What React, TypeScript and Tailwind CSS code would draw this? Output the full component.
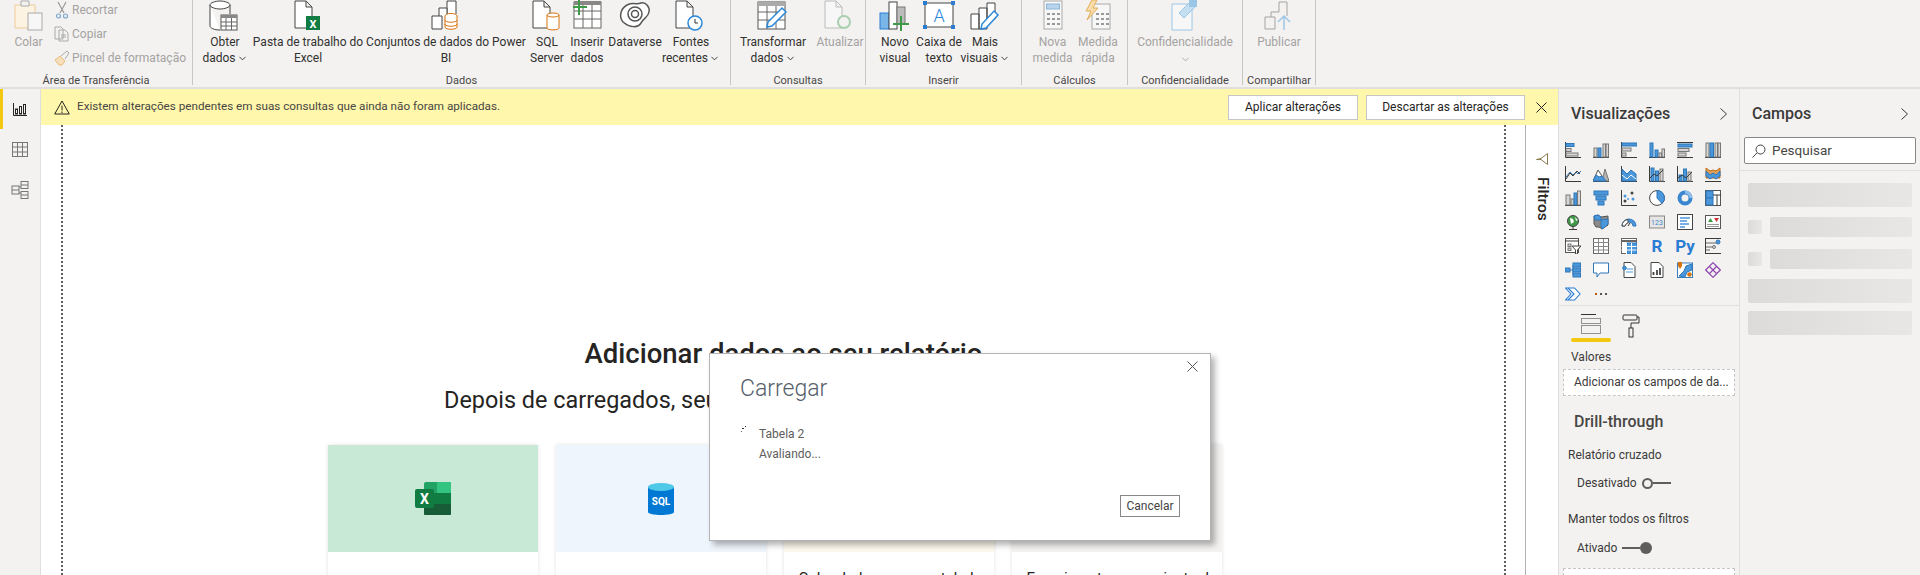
import { ChevronDown } from "lucide-react";
import type { ReactNode } from "react";

const BLUE = "#4a97dc";
const DARK = "#3b3a39";

// small wrapper for the 16px visual picker icons
function V({ children }: { children: ReactNode }) {
  return (
    <svg viewBox="0 0 16 16" className="w-[16px] h-[16px]" fill="none" stroke={DARK} strokeWidth="1">
      {children}
    </svg>
  );
}

const axisL = <path d="M.5 0v15.500H16" />;
const axisB = <path d="M0 15.500h16" />;
const fb = { fill: BLUE, stroke: "#2f77b8" };
const fg = { fill: "#d8d6d4", stroke: "#777" };

const visuals: ReactNode[] = [
  <V>{axisL}<rect x="1" y="1.500" width="8" height="3" {...fb} /><rect x="1" y="6.500" width="5" height="3" {...fg} /><rect x="1" y="11" width="12" height="3" {...fg} /></V>,
  <V>{axisB}<rect x="1" y="6" width="3" height="9" {...fg} /><rect x="5" y="6" width="3" height="9" {...fb} /><rect x="10" y="2" width="2.500" height="13" {...fg} /><rect x="13" y="2" width="2.500" height="13" {...fg} /></V>,
  <V>{axisL}<rect x="1" y="1" width="15" height="3" {...fb} /><rect x="1" y="6" width="9" height="3" {...fg} /><rect x="1" y="11" width="4" height="3" {...fg} /></V>,
  <V>{axisB}<rect x="1" y="1" width="3" height="14" {...fb} /><rect x="6" y="8" width="3" height="7" {...fb} /><rect x="10" y="11" width="2.500" height="4" {...fg} /><rect x="13" y="7" width="2.500" height="8" {...fg} /></V>,
  <V><path d="M0 .5H16M0 15.500H16" /><rect x="1" y="2" width="14" height="3" {...fb} /><rect x="1" y="6.500" width="11" height="3" {...fg} /><rect x="1" y="11" width="8" height="3" {...fg} /></V>,
  <V>{axisB}<rect x="1" y="1" width="3" height="14" {...fg} /><rect x="5" y="1" width="3.500" height="14" {...fb} /><rect x="10" y="1" width="2.500" height="14" {...fg} /><rect x="13" y="1" width="2.500" height="14" {...fg} /></V>,

  <V>{axisL}<path d="M1 11l4-5 3 3 3-3 2 2 3-3" stroke="#2f77b8" /><path d="M1 13l4-6 3 3 4-5 3 3" /></V>,
  <V>{axisB}<path d="M9 15l3-12 4 12z" fill="#b5b3b1" stroke="#777" /><path d="M0 15l5-11 4 6 3 5z" fill="#fff" stroke="#555" /><path d="M0 15l3-6 3 2 3-1 4 5z" {...fb} /></V>,
  <V>{axisL}<path d="M1 3l5 5 4-4 5 4v7H1z" {...fb} /><path d="M1 9l5 4 4-4 5 4" stroke="#fff" /></V>,
  <V>{axisL}<rect x="2" y="2" width="3" height="13" {...fb} /><rect x="6.500" y="5" width="3" height="10" {...fb} /><rect x="11" y="3" width="3" height="12" {...fg} /><path d="M1 12l4-4 3 2 6-6" /></V>,
  <V>{axisL}<rect x="2" y="9" width="3" height="6" {...fb} /><rect x="6.500" y="3" width="3" height="12" {...fb} /><rect x="11" y="6" width="3" height="9" {...fg} /><path d="M1 12l4-3 4 3 6-6" /></V>,
  <V>{axisB}<path d="M1 2l4 3 3-1 3 1 4-3v10H1z" fill="#d9a05e" stroke="#c96a10" /><path d="M1 5l4 4 3-2 3 2 4-4v5l-4 3-3-2-3 2-4-3z" {...fb} /></V>,

  <V>{axisB}<rect x="1" y="5" width="4" height="10" {...fg} /><rect x="6" y="9" width="3" height="6" {...fg} /><rect x="9" y="3" width="3" height="12" {...fb} /><rect x="12.500" y="1" width="3" height="14" {...fg} /></V>,
  <V><rect x="1" y="1" width="14" height="4" {...fb} /><rect x="3" y="6" width="10" height="4" {...fb} /><rect x="5" y="11" width="6" height="4" {...fb} /></V>,
  <V>{axisL}<circle cx="11" cy="3" r="1.500" fill="#444" stroke="none" /><circle cx="4" cy="6" r="1.500" fill={BLUE} stroke="none" /><circle cx="12" cy="9" r="1.500" fill={BLUE} stroke="none" /><circle cx="4" cy="11" r="1.500" fill="#444" stroke="none" /><circle cx="7" cy="9" r="1" fill={BLUE} stroke="none" /></V>,
  <V><circle cx="8" cy="8" r="7.400" fill="#fff" stroke="#444" /><path d="M8 .6A7.400 7.400 0 0 1 13 13.500L8 8z" {...fb} /></V>,
  <V><circle cx="8" cy="8" r="5.500" stroke="#3a87cf" strokeWidth="4" /><path d="M8 .6a7.400 7.400 0 0 1 7.400 7.400h-3a4.400 4.400 0 0 0-4.400-4.400z" fill="#8dbde8" stroke="none" /></V>,
  <V><rect x=".5" y=".5" width="15" height="15" fill="#fff" stroke="#555" /><rect x="1" y="1" width="7" height="7" {...fb} /><rect x="1" y="8" width="7" height="7" {...fb} /><path d="M8 5h8M12 5v11" /></V>,

  <V><circle cx="8" cy="7" r="5.500" fill="#3f9a48" stroke="#444" /><path d="M5 4l3 1 1 3-3 2zM10 3l3 3-2 1z" fill="#fff" stroke="none" /><path d="M4 15.500h8M8 13v2" /></V>,
  <V><path d="M1 2l4-1 3 2 7-1v9l-3 2-3 2-3-2H3l-2-3z" fill="#8a8a8a" stroke="#555" /><path d="M8 6l7-1v5l-3 3-3 2-1-3z" {...fb} /><path d="M1 2l4-1 3 2v3H2z" {...fb} /></V>,
  <V><path d="M1 12a7 7 0 0 1 14 0h-3a4 4 0 0 0-8 0z" {...fb} /><path d="M1 12a7 7 0 0 1 6-6.500V9a4 4 0 0 0-3 3z" fill="#fff" stroke="#444" /><path d="M7 12l2-3" stroke="#333" /></V>,
  <V><rect x=".5" y="2" width="15" height="12" fill="#e8e6e4" stroke="#8a8886" /><text x="8" y="11" fontSize="7" textAnchor="middle" fill="#3a87cf" stroke="none">123</text></V>,
  <V><rect x=".5" y=".5" width="15" height="15" fill="#fff" stroke="#444" /><path d="M3 4h10M3 7h7M3 10h9M3 13h5" stroke={BLUE} strokeWidth="1.300" /></V>,
  <V><rect x=".5" y="1.500" width="15" height="13" fill="#fff" stroke="#555" /><path d="M3 8l2.500-4L8 8z" fill="#3f9a48" stroke="none" /><path d="M9 4h5l-2.500 4z" fill="#d13438" stroke="none" /><path d="M2 10.500h12M2 12.500h12" stroke="#999" /></V>,

  <V><rect x=".5" y=".5" width="13" height="14" fill="#fff" stroke="#555" /><path d="M0 3h14" /><rect x="3" y="6" width="3" height="2.500" {...fg} /><rect x="3" y="10" width="3" height="2.500" {...fg} /><path d="M7 8h9l-3.500 4v4h-2v-4z" fill="#fff" stroke="#444" /></V>,
  <V><rect x=".5" y=".5" width="15" height="15" fill="#fff" stroke="#666" /><path d="M0 4.500h16M.5 8.500h15M.5 12h15M5.500 1v15M10.500 1v15" stroke="#888" /></V>,
  <V><rect x=".5" y=".5" width="15" height="15" fill="#fff" stroke="#666" /><path d="M0 3h16" strokeWidth="2" stroke="#666" /><rect x="6" y="5" width="10" height="11" {...fb} /><path d="M.5 8.500h15M.5 12h15M5.500 5v11M10.500 5v11" stroke="#fff" /></V>,
  <span className="w-[16px] h-[16px] flex items-center justify-center text-[17px] font-bold text-[#2b7cd3] leading-none">R</span>,
  <span className="w-[16px] h-[16px] flex items-center justify-center text-[17px] font-bold text-[#2b7cd3] leading-none">Py</span>,
  <V>{axisB}<path d="M.5 0v16M0 .5h16" /><path d="M1 5h10M1 9h7M1 12h4" stroke="#666" /><circle cx="13" cy="4" r="2" {...fb} /><circle cx="9" cy="9" r="1.500" {...fg} /></V>,

  <V><rect x="0" y="6" width="5" height="4" {...fb} /><path d="M5 8h3M8 3v10" stroke="#2f77b8" /><rect x="8" y="1" width="7.500" height="4" {...fb} /><rect x="8" y="6" width="7.500" height="4" {...fb} /><rect x="8" y="11" width="7.500" height="4" {...fb} /></V>,
  <V><path d="M.5 1h15v10H7l-3 4v-4H.5z" fill="#fff" stroke="#2f77b8" strokeWidth="1" /></V>,
  <V><path d="M3 .5h7l4 4v11H3z" fill="#fff" stroke="#444" /><circle cx="3.500" cy="6" r="1.800" {...fb} /><path d="M6 7h6M5 10h7" stroke={BLUE} /></V>,
  <V><path d="M2 .5h8l4 4v11H2z" fill="#fff" stroke="#444" /><path d="M4.500 13V10M8 13V8M11 13V6" stroke="#444" strokeWidth="1.800" /></V>,
  <V><rect x=".5" y="1" width="15" height="14.500" fill="#fff" stroke="#3a7fc0" /><path d="M2 14l5-5 2-5 6-2v6l-5 2-2 5z" {...fb} /><path d="M1 0h4v4L3 7 1 4z" fill="#d9730d" stroke="none" /><circle cx="12.500" cy="12.500" r="2.300" fill="#d9730d" stroke="none" /></V>,
  <V><path d="M8 .7L15.300 8 8 15.300 .7 8z" stroke="#8e44ad" strokeWidth="1.200" /><path d="M4.500 4.500l7 7M11.500 4.500l-7 7" stroke="#8e44ad" strokeWidth="1.200" /></V>,

  <V><path d="M.5 2h9L15 8l-5.500 6H.5L6 8z" fill="#fff" stroke="#2b7cd3" strokeWidth="1.100" /><path d="M3 2l6 6-6 6" stroke="#2b7cd3" strokeWidth="1.100" /></V>,
  <span className="w-[16px] h-[16px] flex items-center justify-center gap-[3px]">
    <i className="w-[2px] h-[2px] bg-[#b05a10]" />
    <i className="w-[2px] h-[2px] bg-[#555]" />
    <i className="w-[2px] h-[2px] bg-[#555]" />
  </span>,
];

function CloseIcon({ className }: { className?: string }) {
  return (
    <svg width="11" height="11" viewBox="0 0 11 11" stroke="currentColor" fill="none" className={className}>
      <path d="M.5 .5l10 10M10.500 .5l-10 10" />
    </svg>
  );
}

function PaneChevron() {
  return (
    <svg width="7" height="12" viewBox="0 0 7 12" stroke="#3b3a39" fill="none">
      <path d="M.5 .5L6.500 6 .5 11.500" />
    </svg>
  );
}

function RibbonBtn({ className, icon, lines, chevron, disabled }: { className: string; icon: ReactNode; lines: string[]; chevron?: boolean; disabled?: boolean }) {
  return (
    <div className={`flex flex-col items-center shrink-0 whitespace-nowrap leading-[16px] ${disabled ? "text-[#a5a3a1]" : "text-[#323130]"} ${className}`}>
      <div className="h-[31px] flex items-end justify-center">{icon}</div>
      <div className="mt-[3px]">{lines[0]}</div>
      <div className="flex items-center h-[16px]">
        {lines[1]}
        {chevron && <ChevronDown size={11} strokeWidth={2} className="ml-[1px] mt-[1px]" />}
      </div>
    </div>
  );
}

function Group({ className, label, children }: { className: string; label: string; children: ReactNode }) {
  return (
    <div className={`shrink-0 h-[85px] border-r border-[#c8c6c4] ${className}`}>
      <div className="flex h-[74px]">{children}</div>
      <div className="text-center text-[11px] leading-[14px] text-[#484644] whitespace-nowrap">{label}</div>
    </div>
  );
}

function Ico({ children, w = 32, h = 31 }: { children: ReactNode; w?: number; h?: number }) {
  return (
    <svg width={w} height={h} viewBox={`0 0 ${w} ${h}`} fill="none" stroke="#444" strokeWidth="1">
      {children}
    </svg>
  );
}

const docPath = "M1 1h11l6 6v21H1zM12 1v6h6";

function Ribbon() {
  const off = "text-[#a5a3a1]";
  return (
    <div className="flex h-[89px] shrink-0 text-[12px] border-b-[2px] border-[#e1dfdd] bg-[#f3f2f1] overflow-hidden">
      <Group className="w-[193px]" label="Área de Transferência">
        <RibbonBtn
          className="w-[51px] ml-[3px]"
          disabled
          lines={["Colar", ""]}
          icon={
            <Ico>
              <path d="M2 5h20v23H2z" fill="#fdf3e2" stroke="#eecb98" />
              <path d="M8 1h8v5H8z" fill="#f3f2f1" stroke="#aaa" />
              <rect x="15" y="13" width="14" height="17" fill="#f7f7f7" stroke="#aaa" />
            </Ico>
          }
        />
        <div className={`flex flex-col whitespace-nowrap mt-[-2px] ${off}`}>
          <div className="flex items-center gap-[2px] h-[24px]">
            <svg width="16" height="18" viewBox="0 0 16 18" fill="none" stroke="#9a9a9a" strokeWidth="1.200"><path d="M4 1l6 11M12 1L6 12" /><circle cx="4.500" cy="15" r="2" stroke="#7fa7d0" /><circle cx="11.500" cy="15" r="2" stroke="#7fa7d0" /></svg>
            Recortar
          </div>
          <div className="flex items-center gap-[2px] h-[24px]">
            <svg width="16" height="16" viewBox="0 0 16 16" fill="none" stroke="#aaa"><path d="M1 1h6l2 2v10H1zM5 4h6l3 3v8H5z" fill="#f3f2f1" /><path d="M7 9h5M7 11h5" /></svg>
            Copiar
          </div>
          <div className="flex items-center gap-[2px] h-[24px]">
            <svg width="16" height="16" viewBox="0 0 16 16" fill="none" stroke="#aaa"><path d="M1 10l5-4 5 5-3 4H5z" fill="#f6e0bb" stroke="#e7bc7c" /><path d="M7 6l6-5 2 2-4 6" /></svg>
            Pincel de formatação
          </div>
        </div>
      </Group>

      <Group className="w-[538px]" label="Dados">
        <RibbonBtn
          className="w-[64px]"
          lines={["Obter", "dados"]}
          chevron
          icon={
            <Ico>
              <path d="M1 5v21c0 2 4 4 10 4M1 5c0-2 5-4 10-4s10 2 10 4-5 4-10 4S1 7 1 5zM21 5v9" fill="#fff" />
              <rect x="12" y="15" width="16" height="15" fill="#fff" stroke="#555" />
              <path d="M12 15h16v3H12z" fill="#8a8886" stroke="none" />
              <path d="M12 22h16M12 26h16M17 18v12M22.500 18v12" stroke="#666" />
            </Ico>
          }
        />
        <RibbonBtn
          className="w-[102px]"
          lines={["Pasta de trabalho do", "Excel"]}
          icon={
            <Ico w={28}>
              <path d={docPath} fill="#fff" />
              <rect x="12" y="16" width="14" height="14" fill="#107c41" stroke="none" />
              <text x="19" y="27.500" fontSize="11" fontWeight="700" textAnchor="middle" fill="#fff" stroke="none">X</text>
            </Ico>
          }
        />
        <RibbonBtn
          className="w-[174px]"
          lines={["Conjuntos de dados do Power", "BI"]}
          icon={
            <Ico>
              <path d="M17 14V1h9v13" fill="#fff" />
              <path d="M9 16V8h8v10" fill="#fff" />
              <path d="M2 16h10v13H2z" fill="#fff" />
              <ellipse cx="21" cy="16" rx="6" ry="2.500" fill="#fff" stroke="#d9730d" />
              <path d="M15 16v11c0 3 12 3 12 0V16" fill="#fff" stroke="#d9730d" />
              <path d="M15 20c0 3 12 3 12 0M15 24c0 3 12 3 12 0" stroke="#d9730d" />
            </Ico>
          }
        />
        <RibbonBtn
          className="w-[28px]"
          lines={["SQL", "Server"]}
          icon={
            <Ico w={30}>
              <path d={docPath} fill="#fff" />
              <path d="M15 15v13c0 2.500 12 2.500 12 0V15" fill="#fff" stroke="#d9730d" />
              <ellipse cx="21" cy="15" rx="6" ry="2" fill="#fff" stroke="#d9730d" />
            </Ico>
          }
        />
        <RibbonBtn
          className="w-[52px]"
          lines={["Inserir", "dados"]}
          icon={
            <Ico w={30}>
              <rect x="2" y="2" width="27" height="26" fill="#fff" stroke="#666" />
              <path d="M2 1h27v4H2z" fill="#8a8886" stroke="none" />
              <path d="M2 11h27M2 19h27M11 5v23M20 5v23" stroke="#666" />
              <path d="M1 7h14M7 0v15" stroke="#3f9a48" strokeWidth="2" />
            </Ico>
          }
        />
        <RibbonBtn
          className="w-[44px]"
          lines={["Dataverse", ""]}
          icon={
            <Ico>
              <path d="M4 22c-4-5-3-13 4-17 6-3 10 0 14-2 5-1 9 4 8 9-1 6-6 6-8 11-3 5-11 5-18-1z" fill="#fff" stroke="#555" strokeWidth="1.500" />
              <circle cx="16" cy="14" r="7" stroke="#555" strokeWidth="1.500" />
              <circle cx="16" cy="14" r="3.500" stroke="#555" strokeWidth="1.500" />
            </Ico>
          }
        />
        <RibbonBtn
          className="w-[68px]"
          lines={["Fontes", "recentes"]}
          chevron
          icon={
            <Ico>
              <path d={docPath} fill="#fff" />
              <circle cx="20" cy="23" r="7" fill="#fff" stroke="#2b88d8" strokeWidth="1.500" />
              <path d="M20 19v4h3" stroke="#333" />
            </Ico>
          }
        />
      </Group>

      <Group className="w-[135px]" label="Consultas">
        <RibbonBtn
          className="w-[84px]"
          lines={["Transformar", "dados"]}
          chevron
          icon={
            <Ico>
              <rect x="1" y="2" width="27" height="27" fill="#fff" stroke="#555" />
              <path d="M1 2h27v4H1z" fill="#aaa" stroke="none" />
              <path d="M1 12h27M1 20h27M10 6v23M19 6v23" stroke="#666" />
              <path d="M10 27l1-5 14-14 4 4-14 14z" fill="#fff" stroke="#2b88d8" strokeWidth="1.500" />
            </Ico>
          }
        />
        <RibbonBtn
          className="w-[50px]"
          disabled
          lines={["Atualizar", ""]}
          icon={
            <Ico>
              <path d={docPath} stroke="#bbb" fill="#f7f7f7" />
              <circle cx="20" cy="22" r="6" stroke="#a9cfae" strokeWidth="2" fill="#f3f2f1" />
            </Ico>
          }
        />
      </Group>

      <Group className="w-[156px]" label="Inserir">
        <RibbonBtn
          className="w-[58px]"
          lines={["Novo", "visual"]}
          icon={
            <Ico>
              <rect x="1" y="13" width="9" height="16" fill="#7ab5e8" stroke="#2b7cd3" />
              <rect x="10" y="2" width="8" height="27" fill="#fff" />
              <rect x="18" y="7" width="8" height="17" fill="#bbb" stroke="#777" />
              <path d="M14 24h16M22 16v15" stroke="#3f9a48" strokeWidth="2" />
            </Ico>
          }
        />
        <RibbonBtn
          className="w-[30px]"
          lines={["Caixa de", "texto"]}
          icon={
            <Ico>
              <rect x="2" y="3" width="28" height="24" fill="#fff" stroke="#444" />
              <path d="M0 1h4v4H0zM28 1h4v4h-4zM0 25h4v4H0zM28 25h4v4h-4z" fill="#2b7cd3" stroke="none" />
              <text x="16" y="22" fontSize="18" fontWeight="300" textAnchor="middle" fill="#2b88d8" stroke="none">A</text>
            </Ico>
          }
        />
        <RibbonBtn
          className="w-[62px]"
          lines={["Mais", "visuais"]}
          chevron
          icon={
            <Ico>
              <path d="M2 14h8v15H2zM10 8h8v21h-8zM18 3h8v16h-8z" fill="#fff" />
              <path d="M12 29l1-5 12-13 4 4-12 13z" fill="#fff" stroke="#2b88d8" strokeWidth="1.500" />
            </Ico>
          }
        />
      </Group>

      <Group className="w-[106px]" label="Cálculos">
        <RibbonBtn
          className="w-[43px] ml-[9px]"
          disabled
          lines={["Nova", "medida"]}
          icon={
            <Ico w={20}>
              <rect x="1" y="1" width="18" height="28" fill="#f7f7f7" stroke="#aaa" />
              <rect x="3.500" y="4" width="13" height="5" fill="#b7d4ec" stroke="#8cb6d9" />
              <path d="M4 14h3M9 14h3M14 14h3M4 19h3M9 19h3M14 19h3M4 24h3M9 24h3M14 24h3" stroke="#999" strokeWidth="2" />
            </Ico>
          }
        />
        <RibbonBtn
          className="w-[48px]"
          disabled
          lines={["Medida", "rápida"]}
          icon={
            <Ico w={26}>
              <rect x="7" y="4" width="18" height="25" fill="#f7f7f7" stroke="#aaa" />
              <path d="M11 14h3M16 14h3M21 14h3M11 19h3M16 19h3M21 19h3M11 24h3M16 24h3M21 24h3" stroke="#999" strokeWidth="2" />
              <path d="M7 0L1 11h5l-4 9 11-12H8l4-8z" fill="#f8dca9" stroke="#e3ad5c" />
            </Ico>
          }
        />
      </Group>

      <Group className="w-[115px]" label="Confidencialidade">
        <div className={`w-full flex flex-col items-center leading-[16px] ${off}`}>
          <div className="h-[31px] flex items-end">
            <Ico w={28}>
              <path d="M1 4h20v26H1z" fill="#f7f7f7" stroke="#9cc6e6" />
              <path d="M8 13L19 2l5 5-11 11z" fill="#c5dff2" stroke="#9cc6e6" />
              <rect x="18" y="-1" width="8" height="8" fill="#9cc6e6" stroke="none" />
            </Ico>
          </div>
          <div className="mt-[3px]">Confidencialidade</div>
          <ChevronDown size={11} strokeWidth={2} className="mt-[4px]" />
        </div>
      </Group>

      <Group className="w-[73px]" label="Compartilhar">
        <RibbonBtn
          className="w-full"
          disabled
          lines={["Publicar", ""]}
          icon={
            <Ico>
              <path d="M2 17h10v12H2zM8 12h8V2h8v14" stroke="#a5a3a1" />
              <path d="M8 17v-5" stroke="#a5a3a1" />
              <path d="M21 30V16M15 22l6-6 6 6" stroke="#9cc6e6" strokeWidth="1.500" />
            </Ico>
          }
        />
      </Group>
    </div>
  );
}

function SideNav() {
  return (
    <div className="w-[41px] shrink-0 border-r border-[#e1dfdd] bg-[#f3f2f1] flex flex-col">
      <div className="h-[40px] border-l-[3px] border-[#f2c811] flex items-center justify-center pr-[3px]">
        <svg width="14" height="13" viewBox="0 0 14 13" fill="none" stroke="#252423"><path d="M.5 0v12.500H14" /><rect x="2.500" y="6" width="2" height="5" /><rect x="6.500" y="3.500" width="2" height="7.500" /><rect x="10.500" y="1.500" width="2" height="9.500" /></svg>
      </div>
      <div className="h-[40px] flex items-center justify-center">
        <svg width="16" height="15" viewBox="0 0 16 15" fill="none" stroke="#777"><rect x=".5" y=".5" width="15" height="14" /><path d="M.5 5h15M.5 10h15M5.500 .5v14M10.500 .5v14" /></svg>
      </div>
      <div className="h-[42px] flex items-center justify-center">
        <svg width="18" height="18" viewBox="0 0 18 18" fill="none" stroke="#777"><rect x="1" y="5" width="7" height="8" /><path d="M1 9h7" /><rect x="10" y=".5" width="7" height="7" /><path d="M10 4h7" /><rect x="10" y="10.500" width="7" height="7" /><path d="M10 14h7M8 6h2M8 12h2" /></svg>
      </div>
    </div>
  );
}

function Card({ tone, icon, text }: { tone: string; icon?: ReactNode; text?: string }) {
  return (
    <div className="w-[210px] shadow-[0_0_4px_rgba(0,0,0,0.12)]">
      <div className={`h-[107px] flex items-center justify-center ${tone}`}>{icon}</div>
      <div className="h-[60px] px-[15px] pt-[16px] text-[15px] leading-[20px] text-[#252423] whitespace-nowrap overflow-hidden">{text}</div>
    </div>
  );
}

function Canvas() {
  return (
    <div className="relative flex-1 min-w-0 bg-white overflow-hidden">
      <div className="ml-[20px] mr-[19px] h-full border-x-2 border-dotted border-[#605e5c] flex flex-col items-center pt-[211px] text-[#252423]">
        <div className="text-[27.500px] leading-[36px] font-medium">Adicionar dados ao seu relatório</div>
        <div className="text-[23.400px] leading-[32px] mt-[12px] whitespace-nowrap">Depois de carregados, seus dados aparecerão no painel Campos.</div>
        <div className="flex gap-[18px] mt-[29px] mr-[18px]">
          <Card
            tone="bg-[#c9e9d7]"
            icon={
              <svg width="36" height="33" viewBox="0 0 36 33">
                <rect x="9" y="0" width="27" height="33" rx="2" fill="#21a366" />
                <rect x="22" y="0" width="14" height="11" rx="1" fill="#33c481" />
                <rect x="9" y="22" width="27" height="11" rx="1" fill="#185c37" />
                <rect x="9" y="11" width="13" height="11" fill="#107c41" />
                <rect x="22" y="11" width="14" height="11" fill="#107c41" />
                <rect x="0" y="7" width="19" height="19" rx="2" fill="#107c41" />
                <text x="9.500" y="22" fontSize="14" fontWeight="700" textAnchor="middle" fill="#fff">X</text>
              </svg>
            }
          />
          <Card
            tone="bg-[#eef5fc]"
            icon={
              <svg width="26" height="32" viewBox="0 0 26 32">
                <path d="M0 4v25c0 4 26 4 26 0V4z" fill="#0078d4" />
                <ellipse cx="13" cy="4" rx="13" ry="4" fill="#50c8e8" />
                <text x="13" y="22" fontSize="10" fontWeight="700" textAnchor="middle" fill="#fff">SQL</text>
              </svg>
            }
          />
          <Card tone="bg-[#fdf9ee]" text="Colar dados em uma tabela" />
          <Card tone="bg-[#f3f2f1]" text="Experimente um conjunto de" />
        </div>
      </div>
    </div>
  );
}

function LoadDialog() {
  return (
    <div className="absolute left-[709px] top-[353px] w-[502px] h-[188px] bg-white border border-[#b3b3b3] shadow-[4px_4px_6px_rgba(0,0,0,0.3)] pl-[30px] pt-[20px] text-[#605e5c]">
      <CloseIcon className="absolute right-[12px] top-[7px] text-[#555]" />
      <div className="text-[23px] leading-[30px] font-light text-[#55606b]">Carregar</div>
      <div className="flex mt-[20px]">
        <div className="w-[19px] relative">
          <i className="absolute left-[2px] top-[4px] w-[2px] h-[1px] bg-[#333]" />
          <i className="absolute left-[5px] top-[2px] w-[1px] h-[1px] bg-[#333]" />
          <i className="absolute left-[1px] top-[7px] w-[1px] h-[1px] bg-[#666]" />
        </div>
        <div className="text-[12px] leading-[20px]">
          <div>Tabela 2</div>
          <div>Avaliando...</div>
        </div>
      </div>
      <button className="absolute right-[30px] top-[141px] w-[60px] h-[22px] border border-[#8a8886] text-[12px] text-[#444] leading-none">Cancelar</button>
    </div>
  );
}

function VizPanel() {
  return (
    <div className="w-[182px] shrink-0 border-l border-r border-[#e1dfdd] flex flex-col">
      <div className="h-[50px] shrink-0 flex items-center justify-between pl-[12px] pr-[12px] text-[#3b3a39]">
        <span className="text-[16px] font-medium">Visualizações</span>
        <PaneChevron />
      </div>
      <div className="grid grid-cols-[repeat(6,28px)] auto-rows-[24px] pl-[6px] pt-[3px] h-[167px] shrink-0 border-b border-[#e1dfdd]">
        {visuals.map((v, i) => (
          <div key={i} className="flex items-start">{v}</div>
        ))}
      </div>
      <div className="h-[36px] shrink-0 pl-[12px] flex gap-[11px]">
        <div className="w-[40px] flex flex-col items-center pt-[8px] relative h-full">
          <svg width="20" height="20" viewBox="0 0 20 20" fill="none" stroke="#333">
            <path d="M0 .5h15" />
            <path d="M.5 4.500h19v5H.5zM.5 11.500h19v8H.5z" strokeDasharray="1 1" />
          </svg>
          <i className="absolute left-0 right-0 bottom-0 h-[4px] rounded-[2px] bg-[#f2c811]" />
        </div>
        <svg width="18" height="24" viewBox="0 0 18 24" fill="none" stroke="#333" className="mt-[8px]"><rect x="1" y="1" width="14" height="5" rx="1" /><path d="M15 3h2v6H9v5" /><rect x="7" y="14" width="4" height="9" /></svg>
      </div>
      <div className="text-[12px] text-[#3b3a39] pl-[12px] pt-[7px] leading-[16px]">Valores</div>
      <div className="mx-[4px] mt-[4px] h-[27px] shrink-0 bg-white border border-dashed border-[#c8c6c4] pl-[10px] text-[12px] leading-[25px] text-[#3b3a39] whitespace-nowrap overflow-hidden">Adicionar os campos de da...</div>
      <div className="text-[16px] font-medium text-[#484644] pl-[15px] pt-[14px] leading-[24px]">Drill-through</div>
      <div className="text-[12px] text-[#3b3a39] pl-[9px] mt-[13px] leading-[16px]">Relatório cruzado</div>
      <div className="flex items-center text-[12px] text-[#3b3a39] pl-[18px] mt-[12px] h-[16px] gap-[5px]">
        Desativado
        <span className="flex items-center">
          <i className="w-[11px] h-[11px] rounded-full border-[2px] border-[#605e5c]" />
          <i className="w-[18px] h-[2px] bg-[#605e5c]" />
        </span>
      </div>
      <div className="text-[12px] text-[#3b3a39] pl-[9px] mt-[20px] leading-[16px]">Manter todos os filtros</div>
      <div className="flex items-center text-[12px] text-[#3b3a39] pl-[18px] mt-[13px] h-[16px] gap-[5px]">
        Ativado
        <span className="flex items-center">
          <i className="w-[18px] h-[2px] bg-[#605e5c]" />
          <i className="w-[12px] h-[12px] rounded-full bg-[#605e5c]" />
        </span>
      </div>
      <div className="mx-[4px] mt-[12px] h-[28px] shrink-0 bg-white border border-dashed border-[#c8c6c4]" />
    </div>
  );
}

function FieldsPanel() {
  const bar = "bg-gradient-to-r from-[#dddbd9] to-[#e8e7e5] rounded-[2px]";
  return (
    <div className="flex-1 flex flex-col">
      <div className="h-[48px] pt-[2px] flex items-center justify-between pl-[12px] pr-[12px] text-[#3b3a39]">
        <span className="text-[16px] font-medium">Campos</span>
        <PaneChevron />
      </div>
      <div className="h-[34px] border-b border-[#e1dfdd] px-[4px]">
        <div className="h-[27px] bg-white border border-[#8a8886] rounded-[2px] flex items-center pl-[7px] gap-[6px] text-[13.500px] text-[#484644]">
          <svg width="14" height="14" viewBox="0 0 14 14" fill="none" stroke="#444"><circle cx="8.500" cy="5.500" r="4.500" /><path d="M5 9l-4.500 4.500" /></svg>
          Pesquisar
        </div>
      </div>
      <div className="px-[8px] pt-[12px] flex flex-col">
        <div className={`h-[24px] ${bar}`} />
        <div className="flex gap-[8px] mt-[10px]">
          <div className={`w-[14px] h-[14px] mt-[3px] ${bar}`} />
          <div className={`flex-1 h-[20px] ${bar}`} />
        </div>
        <div className="flex gap-[8px] mt-[12px]">
          <div className={`w-[14px] h-[14px] mt-[3px] ${bar}`} />
          <div className={`flex-1 h-[20px] ${bar}`} />
        </div>
        <div className={`h-[24px] mt-[10px] ${bar}`} />
        <div className={`h-[24px] mt-[8px] ${bar}`} />
      </div>
    </div>
  );
}

export default function App() {
  return (
    <div className="relative w-[1920px] h-[575px] overflow-hidden flex flex-col bg-[#f3f2f1] font-['Roboto',sans-serif]">
      <Ribbon />
      <div className="flex flex-1 min-h-0">
        <SideNav />
        <div className="flex flex-col w-[1517px] shrink-0">
          <div className="h-[36px] shrink-0 bg-[#fff7ab] flex items-center text-[12px] text-[#484644]">
            <svg width="16" height="15" viewBox="0 0 16 15" fill="none" stroke="#252423" className="ml-[13px] mr-[7px]"><path d="M8 1l7.300 13H.7z" /><path d="M8 5.500v5M8 11.500v1.500" /></svg>
            <span className="text-[11.700px]">Existem alterações pendentes em suas consultas que ainda não foram aplicadas.</span>
            <button className="ml-auto w-[130px] h-[25px] bg-white border border-[#c8c6c4] text-[#252423]">Aplicar alterações</button>
            <button className="ml-[8px] w-[159px] h-[25px] bg-white border border-[#c8c6c4] text-[#252423]">Descartar as alterações</button>
            <CloseIcon className="ml-[11px] mr-[11px] text-[#252423]" />
          </div>
          <div className="flex flex-1 min-h-0">
            <Canvas />
            <div className="w-[33px] shrink-0 bg-white border-l border-[#b3b0ad] flex flex-col items-center pt-[28px]">
              <svg width="12" height="12" viewBox="0 0 12 12" fill="none" stroke="#8a7a50"><path d="M11.500 .5v11L5 6.500H.5L5 5.500z" /></svg>
              <span className="[writing-mode:vertical-rl] text-[15.500px] font-medium text-[#252423] mt-[12px] leading-none">Filtros</span>
            </div>
          </div>
        </div>
        <VizPanel />
        <FieldsPanel />
      </div>
      <LoadDialog />
    </div>
  );
}
